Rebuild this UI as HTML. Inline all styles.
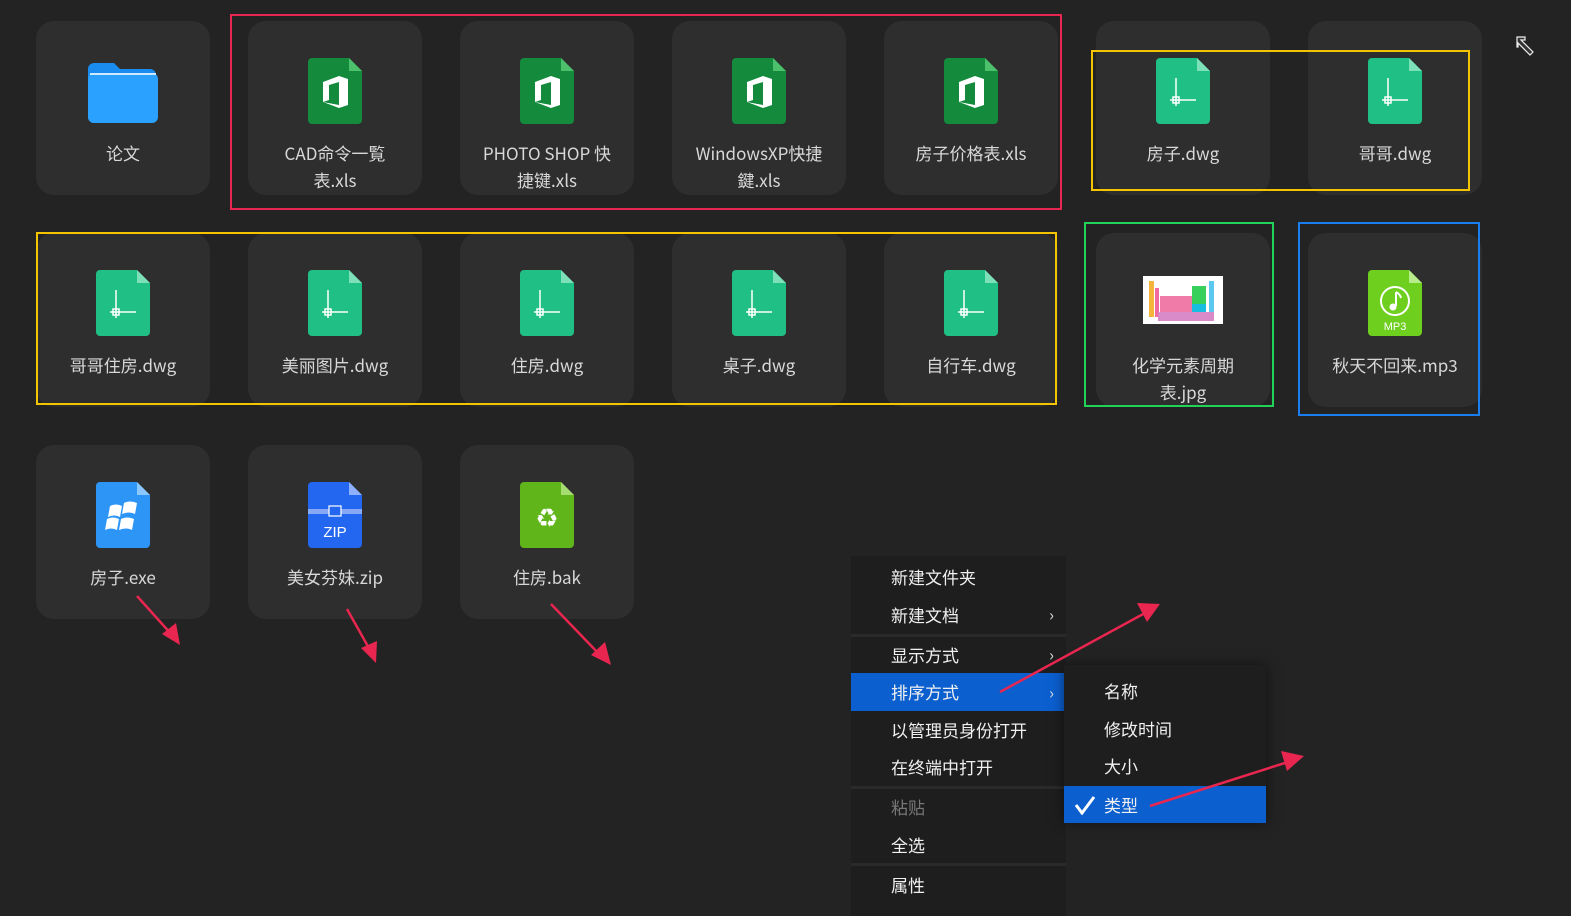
<!DOCTYPE html>
<html><head><meta charset="utf-8"><style>
body{margin:0;width:1571px;height:911px;background:#232323;position:relative;overflow:hidden;font-family:"Noto Sans CJK SC","Liberation Sans",sans-serif;}
.t{position:absolute;width:174px;height:174px;background:#2e2e2e;border-radius:18px;}
.t svg{position:absolute;left:60px;top:37px;}
.t .n{position:absolute;left:0;right:0;top:118px;text-align:center;color:#d8d8d8;font-size:17px;line-height:27px;}
.box{position:absolute;border:2px solid;box-sizing:border-box;}
.menu{position:absolute;left:851px;top:556px;width:215px;height:360px;background:#1e1e1e;}
.sub{position:absolute;left:1064px;top:665px;width:202px;height:158px;background:#1e1e1e;box-shadow:0 0 12px rgba(0,0,0,.5);}
.mi{position:absolute;left:0;right:0;height:37px;line-height:37px;padding-left:40px;color:#f0f0f0;font-size:17px;}
.hl{background:#0b5fcf;}
.sep{position:absolute;left:0;right:0;height:3px;background:#2a2a2a;}
.ch{position:absolute;right:12px;top:0;font-size:16px;color:#ddd;}
</style></head><body>

<div class="t" style="left:36px;top:21px"><svg width="74" height="66" viewBox="0 0 74 66" style="left:52px;top:40px"><path d="M6 2h20l6 6h30a6 6 0 0 1 6 6v42a6 6 0 0 1-6 6H6a6 6 0 0 1-6-6V8a6 6 0 0 1 6-6z" fill="#1a8cf0"/><rect x="0" y="12" width="70" height="50" rx="6" fill="#2aa1ff"/><rect x="2" y="12" width="66" height="2" fill="#cfe9ff"/></svg><div class="n">论文</div></div>

<div class="t" style="left:248px;top:21px"><svg width="54" height="66"><path d="M4 0H41L54 13V62a4 4 0 0 1-4 4H4a4 4 0 0 1-4-4V4a4 4 0 0 1 4-4z" fill="#138a3c"/><path d="M41 0V13H54z" fill="#4cc06a"/><path d="M15 24l16-6 9 3v26l-9 3-16-6 16 3V24l-10 3v15l-6 2z" fill="#fff"/></svg><div class="n">CAD命令一覧<br>表.xls</div></div>
<div class="t" style="left:460px;top:21px"><svg width="54" height="66"><path d="M4 0H41L54 13V62a4 4 0 0 1-4 4H4a4 4 0 0 1-4-4V4a4 4 0 0 1 4-4z" fill="#138a3c"/><path d="M41 0V13H54z" fill="#4cc06a"/><path d="M15 24l16-6 9 3v26l-9 3-16-6 16 3V24l-10 3v15l-6 2z" fill="#fff"/></svg><div class="n">PHOTO SHOP 快<br>捷键.xls</div></div>
<div class="t" style="left:672px;top:21px"><svg width="54" height="66"><path d="M4 0H41L54 13V62a4 4 0 0 1-4 4H4a4 4 0 0 1-4-4V4a4 4 0 0 1 4-4z" fill="#138a3c"/><path d="M41 0V13H54z" fill="#4cc06a"/><path d="M15 24l16-6 9 3v26l-9 3-16-6 16 3V24l-10 3v15l-6 2z" fill="#fff"/></svg><div class="n">WindowsXP快捷<br>鍵.xls</div></div>
<div class="t" style="left:884px;top:21px"><svg width="54" height="66"><path d="M4 0H41L54 13V62a4 4 0 0 1-4 4H4a4 4 0 0 1-4-4V4a4 4 0 0 1 4-4z" fill="#138a3c"/><path d="M41 0V13H54z" fill="#4cc06a"/><path d="M15 24l16-6 9 3v26l-9 3-16-6 16 3V24l-10 3v15l-6 2z" fill="#fff"/></svg><div class="n">房子价格表.xls</div></div>
<div class="t" style="left:1096px;top:21px"><svg width="54" height="66"><path d="M4 0H41L54 13V62a4 4 0 0 1-4 4H4a4 4 0 0 1-4-4V4a4 4 0 0 1 4-4z" fill="#1fbf85"/><path d="M41 0V13H54z" fill="#7ee0b8"/><path d="M20 20V48M14 42H40" stroke="#fff" stroke-width="1.5"/><rect x="17" y="39" width="6" height="6" fill="none" stroke="#fff" stroke-width="1.5"/></svg><div class="n">房子.dwg</div></div>
<div class="t" style="left:1308px;top:21px"><svg width="54" height="66"><path d="M4 0H41L54 13V62a4 4 0 0 1-4 4H4a4 4 0 0 1-4-4V4a4 4 0 0 1 4-4z" fill="#1fbf85"/><path d="M41 0V13H54z" fill="#7ee0b8"/><path d="M20 20V48M14 42H40" stroke="#fff" stroke-width="1.5"/><rect x="17" y="39" width="6" height="6" fill="none" stroke="#fff" stroke-width="1.5"/></svg><div class="n">哥哥.dwg</div></div>

<div class="t" style="left:36px;top:233px"><svg width="54" height="66"><path d="M4 0H41L54 13V62a4 4 0 0 1-4 4H4a4 4 0 0 1-4-4V4a4 4 0 0 1 4-4z" fill="#1fbf85"/><path d="M41 0V13H54z" fill="#7ee0b8"/><path d="M20 20V48M14 42H40" stroke="#fff" stroke-width="1.5"/><rect x="17" y="39" width="6" height="6" fill="none" stroke="#fff" stroke-width="1.5"/></svg><div class="n">哥哥住房.dwg</div></div>
<div class="t" style="left:248px;top:233px"><svg width="54" height="66"><path d="M4 0H41L54 13V62a4 4 0 0 1-4 4H4a4 4 0 0 1-4-4V4a4 4 0 0 1 4-4z" fill="#1fbf85"/><path d="M41 0V13H54z" fill="#7ee0b8"/><path d="M20 20V48M14 42H40" stroke="#fff" stroke-width="1.5"/><rect x="17" y="39" width="6" height="6" fill="none" stroke="#fff" stroke-width="1.5"/></svg><div class="n">美丽图片.dwg</div></div>
<div class="t" style="left:460px;top:233px"><svg width="54" height="66"><path d="M4 0H41L54 13V62a4 4 0 0 1-4 4H4a4 4 0 0 1-4-4V4a4 4 0 0 1 4-4z" fill="#1fbf85"/><path d="M41 0V13H54z" fill="#7ee0b8"/><path d="M20 20V48M14 42H40" stroke="#fff" stroke-width="1.5"/><rect x="17" y="39" width="6" height="6" fill="none" stroke="#fff" stroke-width="1.5"/></svg><div class="n">住房.dwg</div></div>
<div class="t" style="left:672px;top:233px"><svg width="54" height="66"><path d="M4 0H41L54 13V62a4 4 0 0 1-4 4H4a4 4 0 0 1-4-4V4a4 4 0 0 1 4-4z" fill="#1fbf85"/><path d="M41 0V13H54z" fill="#7ee0b8"/><path d="M20 20V48M14 42H40" stroke="#fff" stroke-width="1.5"/><rect x="17" y="39" width="6" height="6" fill="none" stroke="#fff" stroke-width="1.5"/></svg><div class="n">桌子.dwg</div></div>
<div class="t" style="left:884px;top:233px"><svg width="54" height="66"><path d="M4 0H41L54 13V62a4 4 0 0 1-4 4H4a4 4 0 0 1-4-4V4a4 4 0 0 1 4-4z" fill="#1fbf85"/><path d="M41 0V13H54z" fill="#7ee0b8"/><path d="M20 20V48M14 42H40" stroke="#fff" stroke-width="1.5"/><rect x="17" y="39" width="6" height="6" fill="none" stroke="#fff" stroke-width="1.5"/></svg><div class="n">自行车.dwg</div></div>
<div class="t" style="left:1096px;top:233px"><svg width="80" height="48" style="left:47px;top:43px"><rect width="80" height="48" fill="#fff"/><rect x="6" y="5" width="5" height="36" fill="#f5b53a"/><rect x="12" y="12" width="4" height="29" fill="#f06aa0"/><rect x="17" y="20" width="38" height="21" fill="#f07aa8"/><rect x="49" y="10" width="14" height="18" fill="#37d05a"/><rect x="49" y="28" width="14" height="13" fill="#19bde0"/><rect x="66" y="5" width="5" height="36" fill="#5cc8f0"/><rect x="15" y="36" width="56" height="9" fill="#d98ac8"/></svg><div class="n">化学元素周期<br>表.jpg</div></div>
<div class="t" style="left:1308px;top:233px"><svg width="54" height="66"><path d="M4 0H41L54 13V62a4 4 0 0 1-4 4H4a4 4 0 0 1-4-4V4a4 4 0 0 1 4-4z" fill="#6fcf1e"/><path d="M41 0V13H54z" fill="#b8ec8a"/><circle cx="27" cy="31" r="14" fill="none" stroke="#fff" stroke-width="2"/><path d="M28 22v14" stroke="#fff" stroke-width="2"/><circle cx="25" cy="37" r="3.5" fill="#fff"/><path d="M28 22q4 2 5 6" stroke="#fff" stroke-width="2" fill="none"/><text x="27" y="60" font-size="11" fill="#fff" text-anchor="middle" font-family="Liberation Sans">MP3</text></svg><div class="n">秋天不回来.mp3</div></div>

<div class="t" style="left:36px;top:445px"><svg width="54" height="66"><path d="M4 0H41L54 13V62a4 4 0 0 1-4 4H4a4 4 0 0 1-4-4V4a4 4 0 0 1 4-4z" fill="#2d95f5"/><path d="M41 0V13H54z" fill="#8cc8ff"/><path d="M14 24q6-3 12 0l-2 11q-6-3-12 0zM28 21q6-3 13 0l-2 11q-6-3-13 0zM11 37q6-3 12 0l-2 11q-6-3-12 0zM25 37q6-3 13 0l-2 11q-6-3-13 0z" fill="#fff"/></svg><div class="n">房子.exe</div></div>
<div class="t" style="left:248px;top:445px"><svg width="54" height="66"><path d="M4 0H41L54 13V62a4 4 0 0 1-4 4H4a4 4 0 0 1-4-4V4a4 4 0 0 1 4-4z" fill="#2367f0"/><path d="M41 0V13H54z" fill="#8fb0ff"/><rect x="0" y="27" width="54" height="5" fill="#86a8f5"/><rect x="21" y="24" width="12" height="10" fill="#2367f0" stroke="#fff" stroke-width="1.2"/><text x="27" y="55" font-size="15" fill="#fff" text-anchor="middle" font-family="Liberation Sans">ZIP</text></svg><div class="n">美女芬妹.zip</div></div>
<div class="t" style="left:460px;top:445px"><svg width="54" height="66"><path d="M4 0H41L54 13V62a4 4 0 0 1-4 4H4a4 4 0 0 1-4-4V4a4 4 0 0 1 4-4z" fill="#5fb51a"/><path d="M41 0V13H54z" fill="#a6dc72"/><text x="27" y="45" font-size="26" fill="#fff" text-anchor="middle" font-family="DejaVu Sans">♻</text></svg><div class="n">住房.bak</div></div>

<div class="box" style="left:230px;top:14px;width:832px;height:196px;border-color:#e8264f"></div>
<div class="box" style="left:1091px;top:50px;width:379px;height:141px;border-color:#f5c400"></div>
<div class="box" style="left:36px;top:232px;width:1021px;height:173px;border-color:#f5c400"></div>
<div class="box" style="left:1084px;top:222px;width:190px;height:185px;border-color:#22d35a"></div>
<div class="box" style="left:1298px;top:222px;width:182px;height:194px;border-color:#1a7ef0"></div>

<div class="menu">
<div class="mi" style="top:2px">新建文件夹</div>
<div class="mi" style="top:40px">新建文档<span class="ch">›</span></div>
<div class="sep" style="top:78px"></div>
<div class="mi" style="top:80px">显示方式<span class="ch">›</span></div>
<div class="mi hl" style="top:117px;height:38px;line-height:38px">排序方式<span class="ch">›</span></div>
<div class="mi" style="top:155px">以管理员身份打开</div>
<div class="mi" style="top:192px">在终端中打开</div>
<div class="sep" style="top:230px"></div>
<div class="mi" style="top:232px;color:#777">粘贴</div>
<div class="mi" style="top:270px">全选</div>
<div class="sep" style="top:307px"></div>
<div class="mi" style="top:310px">属性</div>
</div>
<div class="sub">
<div class="mi" style="top:7px">名称</div>
<div class="mi" style="top:45px">修改时间</div>
<div class="mi" style="top:82px">大小</div>
<div class="mi hl" style="top:121px"><svg width="22" height="20" style="position:absolute;left:10px;top:9px"><path d="M2 10l6 8L20 2" stroke="#fff" stroke-width="3" fill="none"/></svg>类型</div>
</div>

<svg width="1571" height="911" style="position:absolute;left:0;top:0;pointer-events:none">
<g stroke="#e8264f" stroke-width="2.5" fill="#e8264f">
<line x1="137" y1="596" x2="172" y2="635"/><polygon points="180,645 162,634 176,623" stroke="none"/>
<line x1="347" y1="609" x2="370" y2="650"/><polygon points="376,663 361,648 377,641" stroke="none"/>
<line x1="551" y1="604" x2="600" y2="655"/><polygon points="611,665 591,655 605,642" stroke="none"/>
<line x1="1000" y1="692" x2="1145" y2="613"/><polygon points="1160,604 1137,603 1147,622" stroke="none"/>
<line x1="1150" y1="806" x2="1288" y2="762"/><polygon points="1304,756 1281,751 1287,771" stroke="none"/>
</g>
<g transform="translate(1516,36)"><path d="M1 1h8v3H5l12 12-3 3L2 7v4H1z" fill="#333" stroke="#eee" stroke-width="1.2"/></g>
</svg>
</body></html>
